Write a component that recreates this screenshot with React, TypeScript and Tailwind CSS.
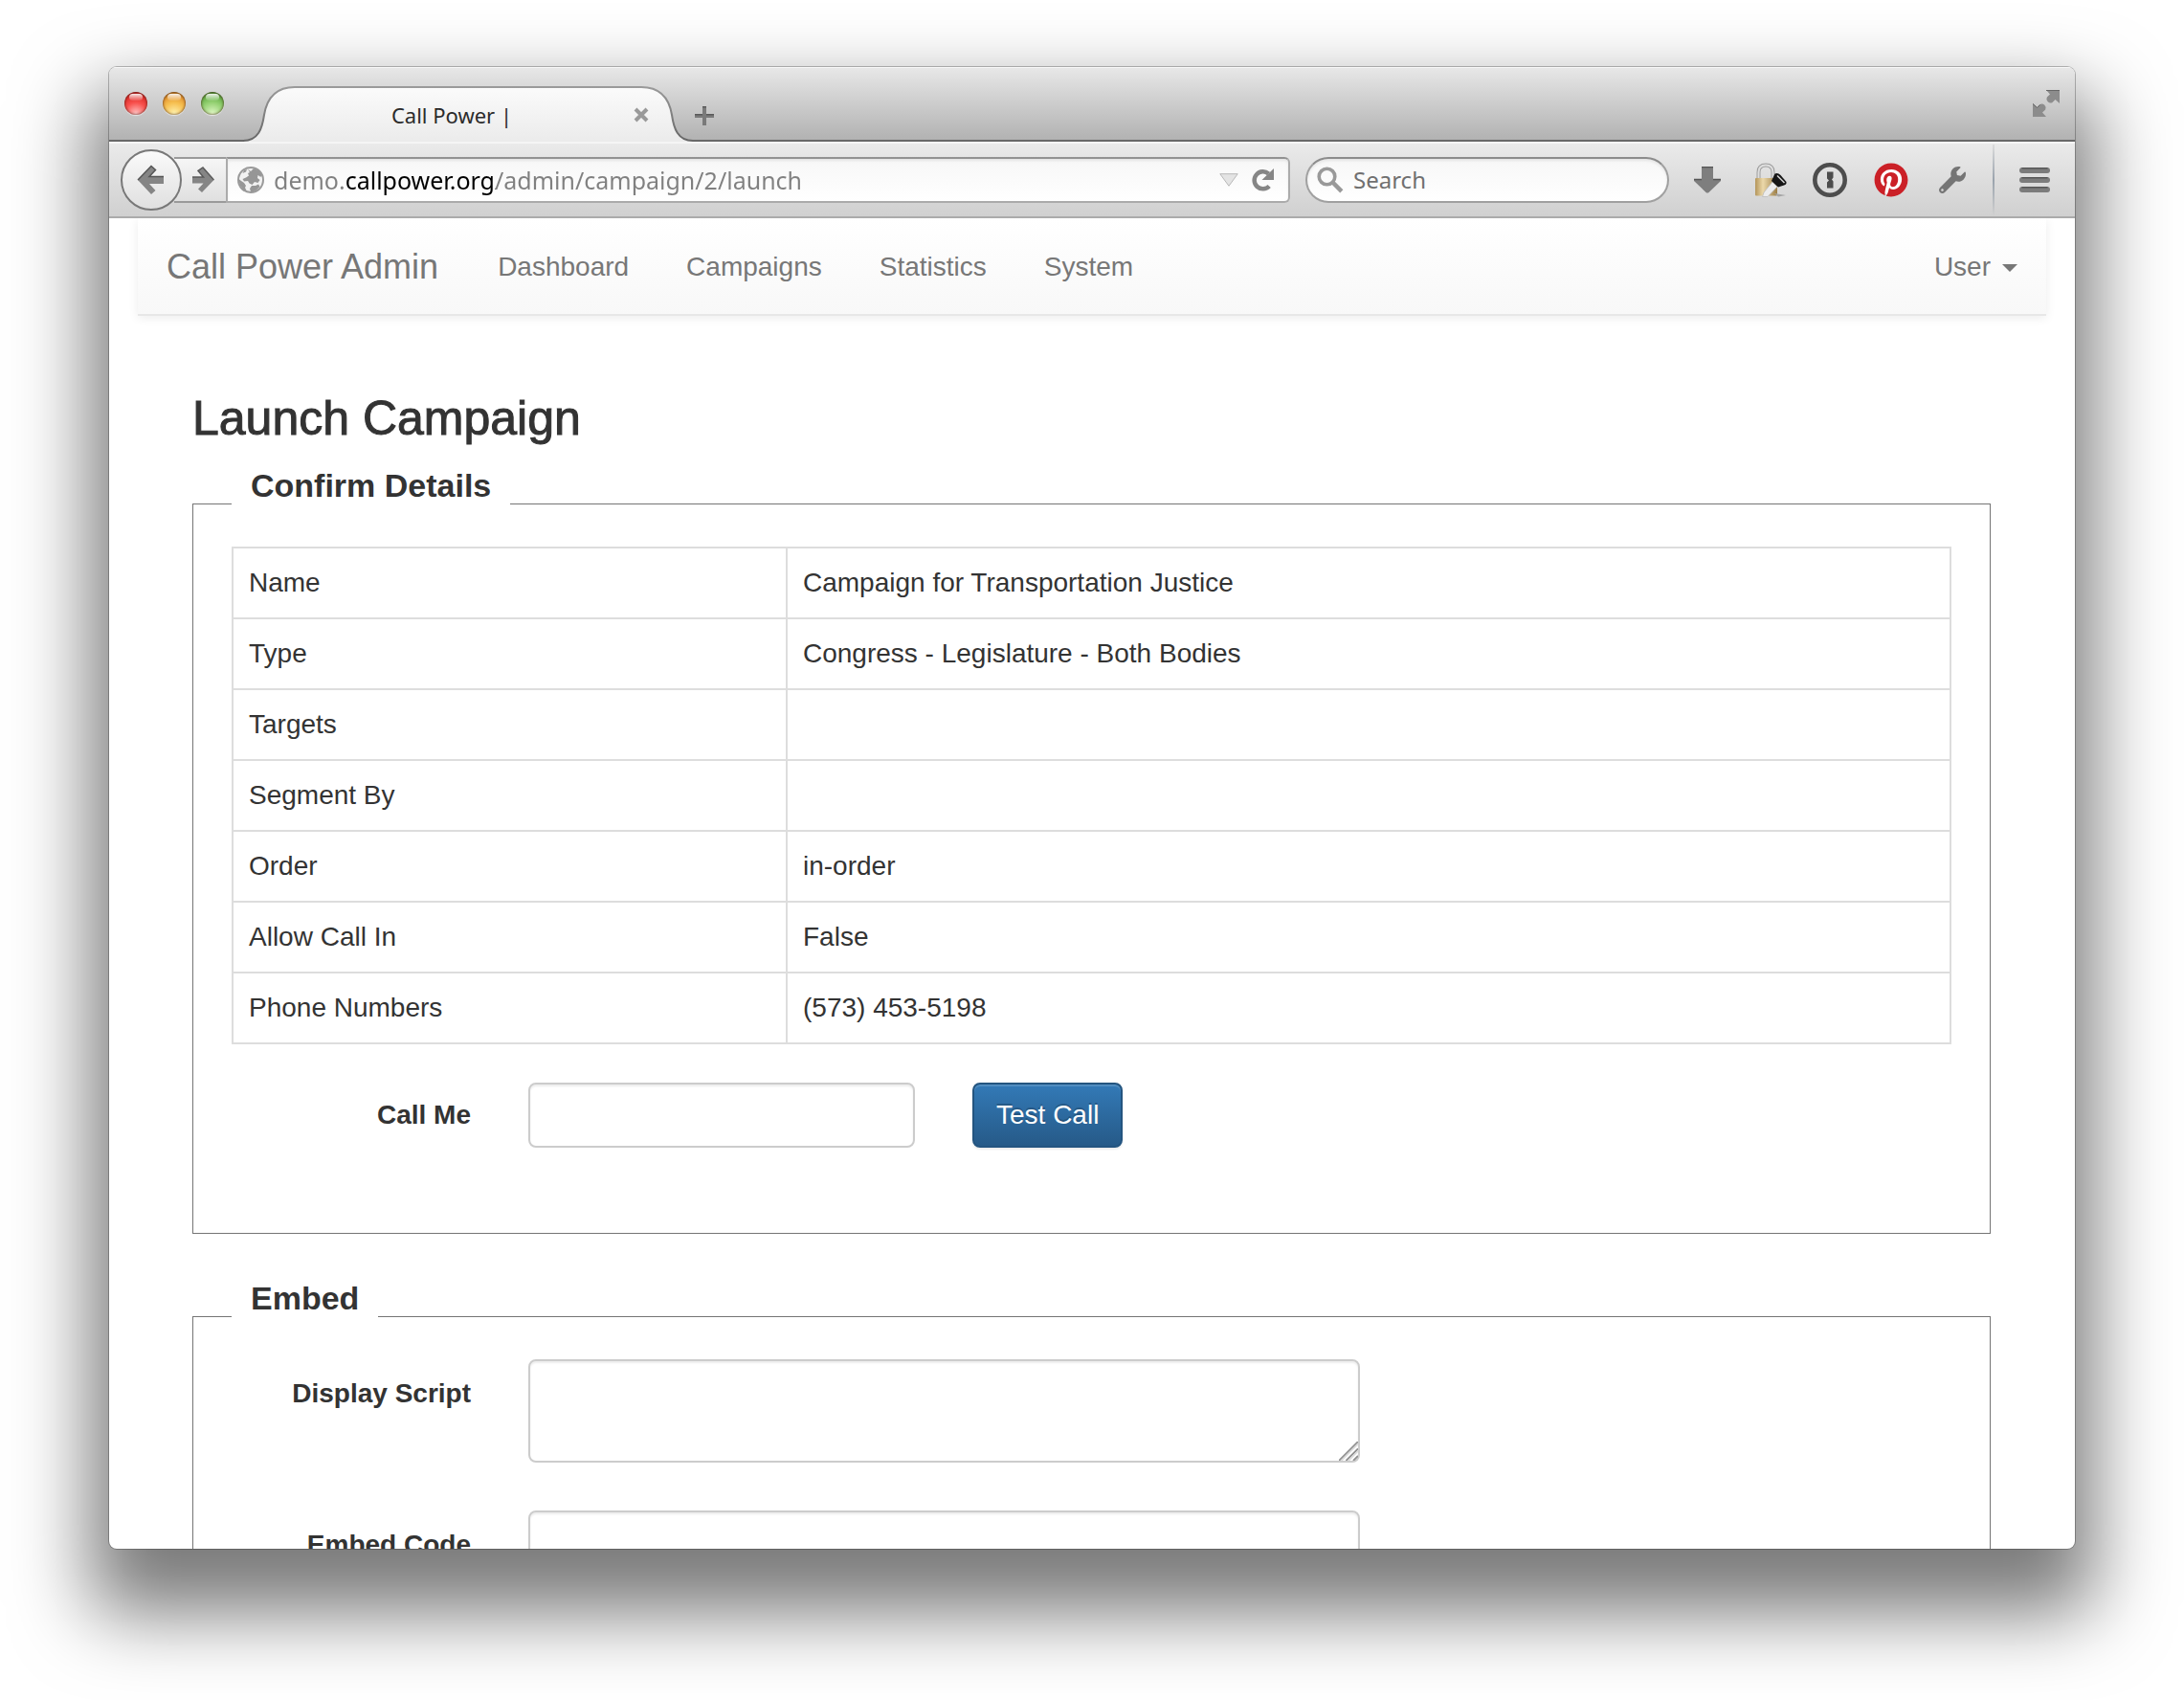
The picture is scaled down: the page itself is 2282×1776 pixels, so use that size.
import React from "react";
import { FaPinterest, FaWrench } from "react-icons/fa";

const details = [
  { label: "Name", value: "Campaign for Transportation Justice" },
  { label: "Type", value: "Congress - Legislature - Both Bodies" },
  { label: "Targets", value: "" },
  { label: "Segment By", value: "" },
  { label: "Order", value: "in-order" },
  { label: "Allow Call In", value: "False" },
  { label: "Phone Numbers", value: "(573) 453-5198" },
];

const navLinks = ["Dashboard", "Campaigns", "Statistics", "System"];

const BackIcon = () => (
  <svg width="30" height="32" viewBox="0 0 30 32">
    <path d="M1 16 15 1.5 19.500 5.500 13 12.500H28V20H13L19.500 27 15 31Z" fill="#858585" />
    <path d="M1 16 15 1.500 19.500 5.500 13 12.500H28" fill="none" stroke="#555" strokeWidth="1.500" />
  </svg>
);

const ForwardIcon = () => (
  <svg width="24" height="28" viewBox="0 0 24 28">
    <path d="M23.500 14 12 1 7 4.500 12.500 11H1V17.500H12.500L7 23.500 11 27Z" fill="#858585" />
    <path d="M1 11H12.500L7 4.500 12 1 23.500 14" fill="none" stroke="#5a5a5a" strokeWidth="1.500" />
  </svg>
);

const GlobeIcon = () => (
  <svg width="28" height="28" viewBox="0 0 28 28">
    <circle cx="14" cy="14" r="13" fill="#f1f1f1" stroke="#9a9a9a" strokeWidth="2" />
    <path
      d="M11 3 14 5 17 2 22 4 25.500 8 24.500 11 21.500 9 21 12 23.500 14 21.500 17 18 16 15.500 19 12.500 17.500 11 15 7 15.500 5.500 13 9 11.500 12 9.500 11 7 13 6Z"
      fill="#969696"
    />
    <path d="M1.500 13 4 15 7 17 9 20 8 22 10 26 6 24 2.500 19Z" fill="#969696" />
    <path d="M15 20 19 20 22 18.500 23.500 21 19 25.500 14 26.500 13 23Z" fill="#969696" />
    <path d="M7 4 10 3 9 5.500 5.500 7Z" fill="#969696" />
  </svg>
);

const ReloadIcon = () => (
  <svg width="24" height="26" viewBox="0 0 24 26">
    <path d="M18.200 19.500A9 9 0 1 1 17.500 6.500" fill="none" stroke="#868686" strokeWidth="4.500" />
    <path d="M23 1V13H10.500Z" fill="#868686" />
  </svg>
);

const SearchIcon = () => (
  <svg width="28" height="28" viewBox="0 0 28 28" className="shrink-0">
    <circle cx="10.500" cy="10.500" r="8.300" fill="none" stroke="#999" strokeWidth="3.600" />
    <path d="M16.500 16.500 25.800 25.800" stroke="#999" strokeWidth="4.500" />
  </svg>
);

const DownloadIcon = () => (
  <svg width="28" height="28" viewBox="0 0 28 28">
    <path d="M8 0H20V13H28V15L15.500 27Q14 28 12.500 27L0 15V13H8Z" fill="#7e7e7e" />
    <path d="M8 .500H20M0 13.500H8M20 13.500H28" stroke="#555" strokeWidth="1.500" />
  </svg>
);

const LockIcon = () => (
  <svg width="36" height="36" viewBox="0 0 36 36">
    <defs>
      <linearGradient id="brass" x1="0" x2="1" y1="0" y2="0">
        <stop offset="0" stopColor="#b4955a" />
        <stop offset=".35" stopColor="#ecd9aa" />
        <stop offset="1" stopColor="#9c7d44" />
      </linearGradient>
    </defs>
    <path d="M5.500 18V10Q5.500 2.500 13 2.500T20.500 10V18" fill="none" stroke="#9d9d9d" strokeWidth="4" />
    <path d="M5.500 18V10Q5.500 2.500 13 2.500T20.500 10V18" fill="none" stroke="#dedede" strokeWidth="2" />
    <rect x="2" y="16" width="23" height="18.500" rx="1" fill="url(#brass)" />
    <path d="M26 35.500 34 34 22 32Z" fill="#a5a5a5" />
    <path d="M20 20 25 25 15 35.500 9.500 35.500 11 31Z" fill="#ececec" stroke="#bdbdbd" strokeWidth=".800" />
    <path d="M22.500 11.500Q25.500 10 28.500 13L34.500 20Q35 22.500 32 23.500L26 25.500 19 19Z" fill="#161616" />
    <path d="M25 13.500 32.500 21" stroke="#d5d5d5" strokeWidth="1.500" />
  </svg>
);

const KeyholeIcon = () => (
  <svg width="36" height="36" viewBox="0 0 36 36">
    <circle cx="18" cy="18" r="15.700" fill="none" stroke="#4d4d4d" strokeWidth="4.600" />
    <path d="M15 9.500H21.500V15.500L20 17.500 21.500 19.500V26.500H15V20.500L17 18.500 15 16.500Z" fill="#4d4d4d" />
  </svg>
);

const MenuIcon = () => (
  <svg width="32" height="28" viewBox="0 0 32 28">
    {[1, 11, 21].map((y) => (
      <g key={y}>
        <rect x="0" y={y} width="32" height="6" rx="3" fill="#7c7c7c" />
        <path d={`M3 ${y + 0.7}H29`} stroke="#565656" strokeWidth="1.400" strokeLinecap="round" />
      </g>
    ))}
  </svg>
);

const FullscreenIcon = () => (
  <svg width="28" height="28" viewBox="0 0 28 28" fill="#8c8c8c">
    <path d="M14 0H28V14L23.500 10 20.500 13A4.200 4.200 0 0 1 14.800 7.500L18 4.500Z" />
    <path d="M14 28H0V14L4.500 18 7.500 15A4.200 4.200 0 0 1 13.200 20.500L10 23.500Z" />
    <path d="M14 .500H28M0 14.500 4.500 18.500 7.500 15.500" fill="none" stroke="#666" />
  </svg>
);

const ResizeGrip = () => (
  <svg width="20" height="20" viewBox="0 0 20 20" className="absolute right-[2px] bottom-[2px]">
    <path d="M0 20 20 0M7.500 20 20 7.500M15 20 20 15" stroke="#909090" strokeWidth="1.800" />
    <path d="M2.500 20 20 2.500M10 20 20 10" stroke="#d8d8d8" strokeWidth="1.500" />
  </svg>
);

const TabShape = () => (
  <svg className="absolute inset-0" width="470" height="58" viewBox="0 0 470 58">
    <defs>
      <linearGradient id="tabFill" x1="0" x2="0" y1="0" y2="1">
        <stop offset="0" stopColor="#fbfbfb" />
        <stop offset="1" stopColor="#ebebeb" />
      </linearGradient>
      <linearGradient id="tabLine" x1="0" x2="0" y1="0" y2="1">
        <stop offset="0" stopColor="#9a9a9a" />
        <stop offset="1" stopColor="#666" />
      </linearGradient>
    </defs>
    <path
      d="M0 58V57C16 57 20 44 22 30C25 12 34 1 54 1H416C436 1 445 12 448 30C450 44 454 57 470 57V58Z"
      fill="url(#tabFill)"
    />
    <path
      d="M0 57C16 57 20 44 22 30C25 12 34 1 54 1H416C436 1 445 12 448 30C450 44 454 57 470 57"
      fill="none"
      stroke="url(#tabLine)"
      strokeWidth="2"
    />
  </svg>
);

const lights = [
  {
    name: "Close window",
    style: "bg-[radial-gradient(circle_at_50%_95%,#ffc4c4_0%,#f8514d_45%,#e0332f_70%,#8f1a1a_100%)]",
  },
  {
    name: "Minimize window",
    style: "bg-[radial-gradient(circle_at_50%_95%,#fff3b0_0%,#f6bf50_45%,#e59a35_70%,#8d5a17_100%)]",
  },
  {
    name: "Zoom window",
    style: "bg-[radial-gradient(circle_at_50%_95%,#e0f7c5_0%,#96d274_45%,#6cb34d_70%,#34691f_100%)]",
  },
];

const TitleBar = () => (
  <div className="flex items-start h-[78px] border-b-2 border-[#686868] bg-gradient-to-b from-[#e8e8e8] to-[#b2b2b2] pl-4 pr-4 shadow-[inset_0_1px_0_#f6f6f6]">
    <div className="flex gap-4 pt-[26px] pr-5">
      {lights.map((light) => (
        <button
          key={light.name}
          aria-label={light.name}
          className={`relative h-6 w-6 rounded-full shadow-[inset_0_0_2px_1px_rgba(60,20,10,0.45),0_1px_1px_rgba(255,255,255,0.6)] ${light.style}`}
        >
          <span className="absolute left-[5px] top-[2px] h-[7px] w-[14px] rounded-full bg-gradient-to-b from-white/90 to-white/10" />
        </button>
      ))}
    </div>

    <div className="relative mt-5 flex h-[58px] w-[470px] items-center pl-[54px] pr-9 pt-[2px]">
      <TabShape />
      <span className="relative flex-1 pr-4 text-center text-[22px] leading-7 text-[#2b2b2b]">
        Call Power |
      </span>
      <button aria-label="Close tab" className="relative flex w-9 justify-center">
        <svg width="16" height="16" viewBox="0 0 16 16">
          <path d="M2 2 14 14M14 2 2 14" stroke="#999" strokeWidth="4" />
        </svg>
      </button>
    </div>

    <button aria-label="New tab" className="mt-[41px] ml-[2px]">
      <svg width="20" height="20" viewBox="0 0 20 20">
        <path d="M8 0H12V8H20V12H12V20H8V12H0V8H8Z" fill="#7a7a7a" />
        <path d="M8 .700H12M0 8.700H8M12 8.700H20" stroke="#5a5a5a" strokeWidth="1.400" />
      </svg>
    </button>

    <button aria-label="Full screen" className="ml-auto mt-6">
      <FullscreenIcon />
    </button>
  </div>
);

const ToolBar = () => (
  <div className="flex items-center h-20 border-b-2 border-[#ababab] bg-gradient-to-b from-[#ebebeb] to-[#d0d0d0] pl-3 pr-[26px] pt-[2px] shadow-[inset_0_2px_0_#f5f5f5]">
    <button
      aria-label="Back"
      className="relative z-10 -mr-2 flex h-16 w-16 items-center justify-center rounded-full border-2 border-[#787878] bg-gradient-to-b from-[#fafafa] to-[#e0e0e0]"
    >
      <BackIcon />
    </button>
    <button
      aria-label="Forward"
      className="flex h-12 w-[54px] items-center justify-end border-y-2 border-[#9a9a9a] bg-gradient-to-b from-[#f6f6f6] to-[#e0e0e0] pr-3"
    >
      <ForwardIcon />
    </button>

    <div className="flex h-12 flex-1 items-center rounded-r-md border-2 border-t-[#929292] border-[#ababab] bg-gradient-to-b from-[#f7f7f7] to-white pl-[10px] pr-[14px] shadow-[inset_0_2px_3px_rgba(0,0,0,0.08)]">
      <GlobeIcon />
      <input
        aria-label="Address"
        defaultValue="demo.callpower.org/admin/campaign/2/launch"
        className="ml-[10px] min-w-0 flex-1 bg-[linear-gradient(90deg,#808080_75px,#000_75px,#000_232px,#808080_232px)] bg-clip-text text-[25px] leading-8 text-transparent outline-none"
      />
      <button aria-label="Show history" className="mr-[14px]">
        <svg width="20" height="14" viewBox="0 0 20 14">
          <path d="M.800 .700H19.200L10 13.300Z" fill="#e4e4e4" stroke="#b8b8b8" />
        </svg>
      </button>
      <button aria-label="Reload">
        <ReloadIcon />
      </button>
    </div>

    <div className="ml-4 mr-2 flex h-12 w-[380px] items-center rounded-full border-2 border-[#a0a0a0] border-t-[#8c8c8c] bg-gradient-to-b from-[#f7f7f7] to-white pl-[10px] shadow-[inset_0_2px_3px_rgba(0,0,0,0.08)]">
      <SearchIcon />
      <input
        type="search"
        aria-label="Search"
        placeholder="Search"
        className="ml-[10px] min-w-0 flex-1 bg-transparent text-2xl text-[#707070] outline-none placeholder:text-[#707070]"
      />
    </div>

    <button aria-label="Downloads" className="flex w-16 justify-center">
      <DownloadIcon />
    </button>
    <button aria-label="Passwords" className="flex w-16 justify-center pl-1">
      <LockIcon />
    </button>
    <button aria-label="1Password" className="flex w-16 justify-center">
      <KeyholeIcon />
    </button>
    <button aria-label="Pin it" className="flex w-16 justify-center">
      <span className="rounded-full bg-[radial-gradient(circle,#fff_60%,transparent_62%)]">
        <FaPinterest className="h-9 w-9 text-[#cb2027]" />
      </span>
    </button>
    <button aria-label="Developer tools" className="flex w-16 justify-center">
      <FaWrench className="h-7 w-7 text-[#757575]" />
    </button>
    <div className="ml-[10px] mr-[26px] h-[74px] w-[2px] bg-gradient-to-b from-[#dcdcdc] via-[#9aa3ad] to-[#d0d0d0]" />
    <button aria-label="Menu">
      <MenuIcon />
    </button>
  </div>
);

const NavBar = () => (
  <nav className="mx-[30px] flex h-[102px] items-center border-b-2 border-[#e7e7e7] bg-gradient-to-b from-white to-[#f8f8f8] px-[30px] pt-[2px] text-[28px] leading-10 text-[#777] shadow-[0_2px_10px_rgba(0,0,0,0.08)]">
    <a href="#" className="mr-8 text-4xl">
      Call Power Admin
    </a>
    {navLinks.map((link) => (
      <a key={link} href="#" className="px-[30px]">
        {link}
      </a>
    ))}
    <button className="ml-auto flex items-center gap-3">
      User
      <span className="mt-[2px] border-x-8 border-t-8 border-x-transparent border-t-[#777]" />
    </button>
  </nav>
);

interface SectionProps {
  title: string;
  className?: string;
  children: React.ReactNode;
}

const Section: React.FC<SectionProps> = ({ title, className = "", children }) => (
  <fieldset className={`border border-[#757575] px-10 ${className}`}>
    <legend className="px-5 pb-[38px] text-[34px] leading-10 font-bold">{title}</legend>
    <div className="pt-[6px]">{children}</div>
  </fieldset>
);

const fieldStyle =
  "block w-full resize-none rounded-lg border-2 border-[#ccc] bg-white px-6 shadow-[inset_0_2px_2px_rgba(0,0,0,0.075)] outline-none";

const App: React.FC = () => {
  return (
    <div className="flex h-screen flex-col bg-white px-[114px] pt-[70px] pb-[158px]">
      <div className="flex min-h-0 flex-1 flex-col overflow-hidden rounded-lg bg-white shadow-[0_0_0_1px_rgba(0,0,0,0.25),0_48px_80px_20px_rgba(0,0,0,0.52)]">
        <header className="shrink-0 font-['Noto_Sans',sans-serif]">
          <TitleBar />
          <ToolBar />
        </header>

        <main className="min-h-0 flex-1 overflow-hidden font-['Liberation_Sans',Arial,sans-serif] text-[28px] leading-10 text-[#333]">
          <NavBar />

          <div className="pr-[88px] pl-[87px] pt-20">
            <h1 className="mb-[23px] text-[50px] leading-[54px] [-webkit-text-stroke:1px]">Launch Campaign</h1>

            <Section title="Confirm Details" className="pb-[89px]">
              <table className="w-full border-collapse">
                <tbody>
                  {details.map((row) => (
                    <tr key={row.label}>
                      <th
                        scope="row"
                        className="h-[74px] w-[579px] border-2 border-[#ddd] px-4 text-left font-normal"
                      >
                        {row.label}
                      </th>
                      <td className="border-2 border-[#ddd] px-4">{row.value}</td>
                    </tr>
                  ))}
                </tbody>
              </table>

              <div className="mt-10 flex items-center gap-[60px]">
                <label htmlFor="call-me" className="w-[250px] text-right font-bold">
                  Call Me
                </label>
                <div className="w-[404px]">
                  <input id="call-me" type="tel" className={`${fieldStyle} h-[68px]`} />
                </div>
                <button className="h-[68px] rounded-lg border-2 border-[#245580] bg-gradient-to-b from-[#337ab7] to-[#265a88] px-[23px] text-white [text-shadow:0_-2px_0_rgba(0,0,0,0.2)] shadow-[inset_0_2px_0_rgba(255,255,255,0.15),0_2px_2px_rgba(0,0,0,0.075)]">
                  Test Call
                </button>
              </div>
            </Section>

            <Section title="Embed" className="mt-[47px] pb-10">
              <div className="flex flex-col gap-[50px]">
                {["Display Script", "Embed Code"].map((label) => (
                  <div key={label} className="flex gap-[60px]">
                    <label htmlFor={label} className="w-[250px] pt-4 text-right font-bold">
                      {label}
                    </label>
                    <div className="relative w-[869px]">
                      <textarea id={label} className={`${fieldStyle} h-[108px]`} />
                      <ResizeGrip />
                    </div>
                  </div>
                ))}
              </div>
            </Section>
          </div>
        </main>
      </div>
    </div>
  );
};

export default App;
